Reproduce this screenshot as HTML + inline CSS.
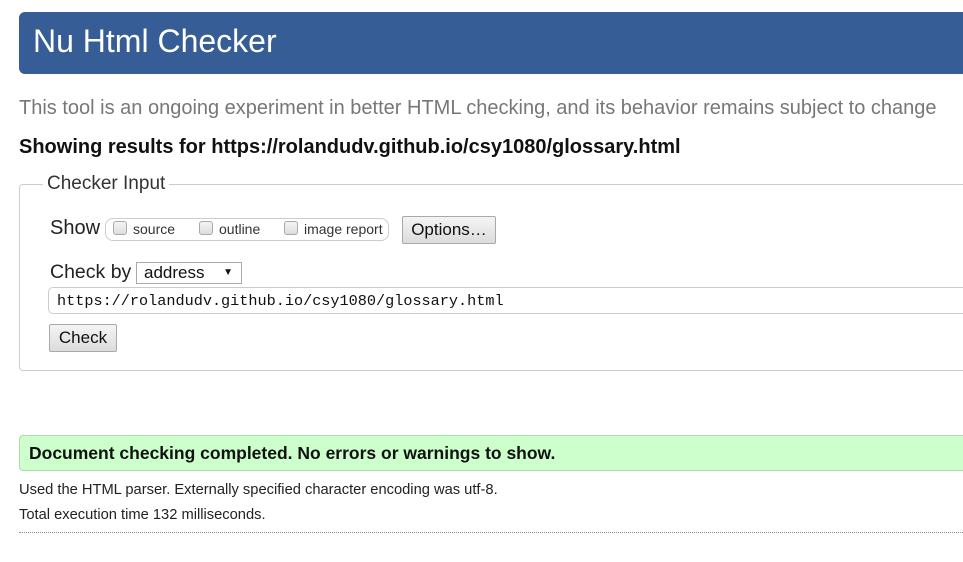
<!DOCTYPE html>
<html><head><meta charset="utf-8"><style>
body{margin:0;width:963px;height:562px;background:#fff;font-family:"Liberation Sans",Arial,sans-serif;position:relative;overflow:hidden;color:#111}
.a{position:absolute;white-space:nowrap}
.hdr{left:19px;top:12px;width:960px;height:62px;background:#365d96;border-radius:6px}
.hdr span{position:absolute;left:14px;top:11px;color:#fff;font-size:32px}
.btn{background:linear-gradient(#f4f4f4,#dcdcdc);border:1px solid #a9a9a9;border-radius:2px;font-size:16px;color:#111;text-align:center;box-sizing:border-box}
.cb{display:inline-block;width:12px;height:12px;border:1px solid #aaa;border-radius:3px;background:linear-gradient(#f4f4f4,#ddd);vertical-align:-1px;margin-right:6px}
</style></head><body>
<div class="a hdr"><span>Nu Html Checker</span></div>
<div class="a" style="left:19px;top:97px;font-size:20px;color:#777">This tool is an ongoing experiment in better HTML checking, and its behavior remains subject to change</div>
<div class="a" style="left:19px;top:136px;font-size:20px;font-weight:bold;color:#111">Showing results for https://rolandudv.github.io/csy1080/glossary.html</div>
<div class="a" style="left:19px;top:184px;width:960px;height:187px;border:1px solid #ccc;border-radius:4px;box-sizing:border-box"></div>
<div class="a" style="left:43px;top:173px;background:#fff;padding:0 4px;font-size:19px;color:#333">Checker Input</div>
<div class="a" style="left:50px;top:217px;font-size:20px;color:#222">Show</div>
<div class="a" style="left:105px;top:218px;width:284px;height:23px;border:1px solid #ccc;border-radius:8px;box-sizing:border-box"></div>
<div class="a" style="left:113px;top:221px;font-size:14px;color:#333"><span class="cb"></span>source</div>
<div class="a" style="left:199px;top:221px;font-size:14px;color:#333"><span class="cb"></span>outline</div>
<div class="a" style="left:284px;top:221px;font-size:14px;color:#333"><span class="cb"></span>image report</div>
<div class="a btn" style="left:402px;top:216px;width:94px;height:28px;line-height:26px;font-size:17px">Options…</div>
<div class="a" style="left:50px;top:261px;font-size:19.5px;color:#222">Check by</div>
<div class="a" style="left:136px;top:262px;width:106px;height:22px;border:1px solid #aaa;box-sizing:border-box;font-size:17px;line-height:20px;padding-left:7px;color:#111">address<span style="position:absolute;right:8px;font-size:10px">▼</span></div>
<div class="a" style="left:48px;top:287px;width:930px;height:27px;border:1px solid #ccc;border-radius:5px;box-sizing:border-box;font-family:'Liberation Mono',monospace;font-size:15.2px;line-height:27px;padding-left:8px;color:#111">https://rolandudv.github.io/csy1080/glossary.html</div>
<div class="a btn" style="left:49px;top:324px;width:68px;height:28px;line-height:26px;font-size:17px">Check</div>
<div class="a" style="left:19px;top:435px;width:960px;height:36px;background:#ccffcc;border:1px solid #aadcaa;border-radius:4px;box-sizing:border-box"></div>
<div class="a" style="left:29px;top:443px;font-size:17.5px;font-weight:bold;color:#111">Document checking completed. No errors or warnings to show.</div>
<div class="a" style="left:19px;top:482px;font-size:14.7px;color:#222">Used the HTML parser. Externally specified character encoding was utf-8.</div>
<div class="a" style="left:19px;top:507px;font-size:14.7px;color:#222">Total execution time 132 milliseconds.</div>
<div class="a" style="left:19px;top:532px;width:944px;border-top:1px dotted #888"></div>
</body></html>
